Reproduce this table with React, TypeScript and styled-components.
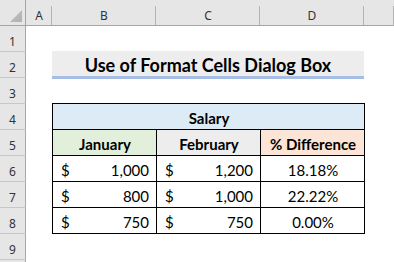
import React from 'react';
import styled, { createGlobalStyle } from 'styled-components';

const GlobalStyle = createGlobalStyle`
  html, body {
    margin: 0;
    padding: 0;
    background: #fff;
  }
  body {
    width: 394px;
    height: 262px;
    overflow: hidden;
    font-family: Lato, 'Liberation Sans', sans-serif;
  }
`;

const Sheet = styled.div`
  display: grid;
  grid-template-columns: 26px 26px 104px 104px 104px 1fr;
  grid-template-rows: repeat(11, 26px);
  width: 394px;
  height: 262px;
  overflow: hidden;
  background: #fff;
`;

const Corner = styled.div`
  grid-column: 1;
  grid-row: 1;
  box-sizing: border-box;
  background: #e6e6e6;
  border-right: 1px solid #a6a6a6;
  border-bottom: 1px solid #a6a6a6;
  display: flex;
  align-items: flex-end;
  justify-content: flex-end;
  padding: 0 3px 3px 0;
`;

const ColHead = styled.div<{ $col: number }>`
  grid-column: ${p => p.$col};
  grid-row: 1;
  box-sizing: border-box;
  background-color: #e6e6e6;
  background-image: linear-gradient(#b4b4b4, #b4b4b4);
  background-size: 1px calc(100% - 6px);
  background-position: right bottom;
  background-repeat: no-repeat;
  border-bottom: 1px solid #a6a6a6;
  display: flex;
  justify-content: center;
  align-items: center;
  padding-top: 5px;
  font-family: 'Noto Sans', 'Open Sans', sans-serif;
  font-size: 12px;
  color: #333;
`;

const RowHead = styled.div<{ $row: number }>`
  grid-column: 1;
  grid-row: ${p => p.$row + 1};
  box-sizing: border-box;
  background: #e6e6e6;
  border-right: 1px solid #a6a6a6;
  border-bottom: 1px solid #c8c8c8;
  display: flex;
  justify-content: center;
  align-items: center;
  padding-top: 6px;
  font-family: 'Noto Sans', 'Open Sans', sans-serif;
  font-size: 12px;
  color: #333;
`;

const Title = styled.div`
  grid-column: 3 / span 3;
  grid-row: 3;
  align-self: start;
  margin-top: -1px;
  height: 28px;
  box-sizing: border-box;
  background: #ededed;
  border-bottom: 3px solid #a6bde5;
  display: flex;
  justify-content: center;
  align-items: center;
  padding-top: 3px;
  font-size: 18px;
  font-weight: 700;
  color: #000;
`;

const Table = styled.div`
  grid-column: 3 / span 3;
  grid-row: 5 / span 5;
  align-self: start;
  justify-self: start;
  margin-top: -1px;
  display: grid;
  grid-template-columns: repeat(3, 104px);
  grid-template-rows: repeat(5, 26px);
  border-left: 1px solid #000;
  border-top: 1px solid #000;
  font-size: 15px;
  color: #000;
`;

const Cell = styled.div<{ $bg?: string; $span?: number; $bold?: boolean; $align?: string }>`
  grid-column: span ${p => p.$span ?? 1};
  box-sizing: border-box;
  background: ${p => p.$bg ?? '#fff'};
  border-right: 1px solid #000;
  border-bottom: 1px solid #000;
  display: flex;
  align-items: center;
  justify-content: ${p => p.$align ?? 'center'};
  padding: 2px 7px 0 8px;
  font-weight: ${p => (p.$bold ? 700 : 400)};
`;

const Money = styled.span`
  flex: 1;
  display: flex;
  justify-content: space-between;
`;

const months = [
  { name: 'January', bg: '#e2efda' },
  { name: 'February', bg: '#ededed' },
  { name: '% Difference', bg: '#fce4d6' }
];

const rows = [
  { jan: '1,000', feb: '1,200', diff: '18.18%' },
  { jan: '800', feb: '1,000', diff: '22.22%' },
  { jan: '750', feb: '750', diff: '0.00%' }
];

const letters = ['A', 'B', 'C', 'D', ''];

const CornerMark = () => (
  <svg width="12" height="12" viewBox="0 0 12 12">
    <defs>
      <linearGradient id="cm" x1="0" y1="0" x2="1" y2="1">
        <stop offset="0" stopColor="#c4c4c4" />
        <stop offset="1" stopColor="#b0b0b0" />
      </linearGradient>
    </defs>
    <polygon points="12,0 12,12 0,12" fill="url(#cm)" />
  </svg>
);

const Amount: React.FC<{ value: string }> = ({ value }) => (
  <Cell $align="stretch">
    <Money>
      <span>$</span>
      <span>{value}</span>
    </Money>
  </Cell>
);

export default function App() {
  return (
    <>
      <GlobalStyle />
      <Sheet>
        <Corner>
          <CornerMark />
        </Corner>
        {letters.map((l, i) => (
          <ColHead key={i} $col={i + 2}>
            {l}
          </ColHead>
        ))}
        {Array.from({ length: 10 }, (_, i) => (
          <RowHead key={i} $row={i + 1}>
            {i < 9 ? i + 1 : ''}
          </RowHead>
        ))}
        <Title>Use of Format Cells Dialog Box</Title>
        <Table>
          <Cell $span={3} $bg="#ddebf7" $bold>
            Salary
          </Cell>
          {months.map(m => (
            <Cell key={m.name} $bg={m.bg} $bold>
              {m.name}
            </Cell>
          ))}
          {rows.map(r => (
            <React.Fragment key={r.diff}>
              <Amount value={r.jan} />
              <Amount value={r.feb} />
              <Cell>{r.diff}</Cell>
            </React.Fragment>
          ))}
        </Table>
      </Sheet>
    </>
  );
}
